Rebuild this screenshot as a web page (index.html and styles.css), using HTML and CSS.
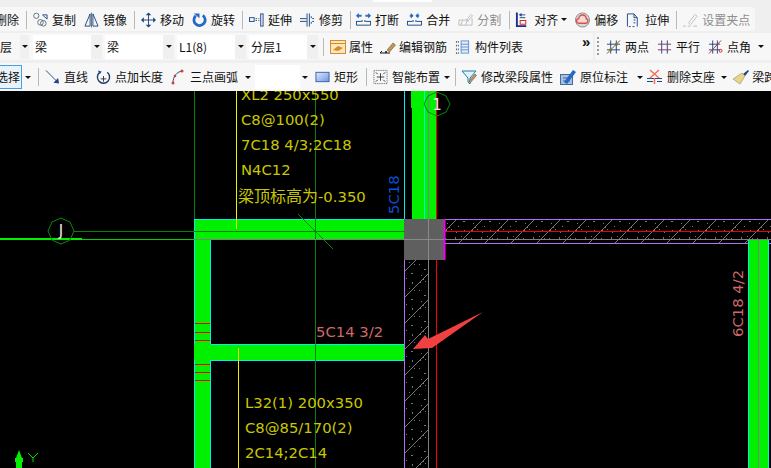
FILE: index.html
```html
<!DOCTYPE html>
<html lang="zh">
<head>
<meta charset="utf-8">
<title>梁绘制</title>
<link rel="stylesheet" href="styles.css">
</head>
<body>
<i class="notch"></i>
<div class="toolbars">
  <div class="row row-one">
    <div class="bar bar-one">
      <span class="label clip-left">删除</span>
      <i class="sep"></i>
      <span class="tool"><svg class="ic" viewBox="0 0 16 16"><circle cx="3.500" cy="3.500" r="2.800" class="s-gray"/><circle cx="11" cy="11.500" r="3" class="s-gray"/><circle cx="8" cy="10.500" r="3" class="s-gray"/><path d="M10.500 2.500h4.500v4.500M15 7l-5-4.500" class="s-navy"/></svg><span class="label">复制</span></span>
      <span class="tool"><svg class="ic" viewBox="0 0 16 16"><path d="M6.500 1.500v13H1zM9.500 1.500v13H15z" class="s-navy"/><path d="M8 0v16" class="s-gray"/></svg><span class="label">镜像</span></span>
      <i class="sep"></i>
      <span class="tool"><svg class="ic" viewBox="0 0 16 16"><path d="M8 1v14M1 8h14" class="s-navy"/><path d="M8 0l3 3H5zM8 16l3-3H5zM0 8l3-3v6zM16 8l-3-3v6z" class="f-navy"/></svg><span class="label">移动</span></span>
      <span class="tool"><svg class="ic" viewBox="0 0 16 16"><path d="M4 3.500a6 6 0 1 0 7.500-.5" class="s-blue-thick"/><path d="M2 1h6v5z" class="f-blue"/></svg><span class="label">旋转</span></span>
      <i class="sep"></i>
      <span class="tool"><svg class="ic" viewBox="0 0 16 16"><rect x="0.500" y="5.500" width="5" height="4" class="s-navy"/><path d="M7 6.500h1.500M7 8.500h1.500M10 6.500h1M10 8.500h1" class="s-navy"/><rect x="12.500" y="1.500" width="2.500" height="13" class="s-navy"/></svg><span class="label">延伸</span></span>
      <span class="tool"><svg class="ic" viewBox="0 0 16 16"><path d="M0 6.500h7M0 9.500h7M7.500 1v14M10 1v14M12 4v2M12 10v2M13 6.500h2M13 9.500h2" class="s-navy"/></svg><span class="label">修剪</span></span>
      <i class="sep sep-break"></i>
      <span class="tool"><svg class="ic" viewBox="0 0 16 16"><path d="M1 3.500h5M10 3.500h5" class="s-blue-2"/><path d="M0 3.500l3-3v6zM16 3.500l-3-3v6z" class="f-blue"/><path d="M.5 9v4.500h15V9M.5 9.500H6M10 9.500h5.500M6.500 8v2M9.500 8v2" class="s-navy"/></svg><span class="label">打断</span></span>
      <span class="tool"><svg class="ic" viewBox="0 0 16 16"><path d="M3 3.500h3M10 3.500h3" class="s-blue-2"/><path d="M7 3.500l-3-3v6zM9 3.500l3-3v6z" class="f-blue"/><path d="M.5 9v4.500h15V9M.5 9.500H6M10 9.500h5.500M6.500 8v2M9.500 8v2" class="s-navy"/></svg><span class="label">合并</span></span>
      <span class="tool"><svg class="ic" viewBox="0 0 16 16"><path d="M1 8h10M1 13.500h14M1 8v5.500M15 6v7.500M5 8l-2 5.500M10 8l-2 5.500" class="s-light"/><path d="M9 8l5-6 1.500 1.500-5 6z" class="s-light"/></svg><span class="label muted">分割</span></span>
      <i class="sep sep-wide"></i>
      <span class="tool tool-align"><svg class="ic" viewBox="0 0 16 16"><path d="M2 0v15M1 14.500h11" class="s-navy-2"/><rect x="5.500" y="8.500" width="6" height="4" class="s-red"/><path d="M11 2.500H5M11 5.500H5" class="s-navy"/><path d="M4 2.500l3-2v4z" class="f-navy"/></svg><span class="label">对齐</span><b class="caret"></b></span>
      <span class="tool"><svg class="ic" viewBox="0 0 16 16"><circle cx="8" cy="8" r="7.500" class="s-gray-fill"/><path d="M4.500 11.500a2.500 2.500 0 0 1-.5-5 4 4 0 0 1 8 .2 2.500 2.500 0 0 1 0 4.800z" class="s-red-soft"/></svg><span class="label">偏移</span></span>
      <span class="tool"><svg class="ic" viewBox="0 0 16 16"><path d="M1.500 15V1.500h7l3.500 4V15" class="s-navy"/><path d="M8.500 1.500v4h3.500M8 8h2M8 11h2M3 15h2M7 15h2" class="s-navy"/></svg><span class="label">拉伸</span></span>
      <i class="sep"></i>
      <span class="tool"><svg class="ic" viewBox="0 0 16 16"><path d="M0 14.500h3M5 14.500h3M11 14.500h4M6 11l7-9 2 2-7 9z" class="s-light"/></svg><span class="label muted">设置夹点</span></span>
    </div>
  </div>

  <div class="row row-two">
    <div class="bar bar-two-left">
      <span class="label stub">层</span>
      <span class="arrow-btn stub-arrow"><b class="caret"></b></span>
      <span class="combo"><span class="field">梁</span><span class="arrow-btn"><b class="caret"></b></span></span>
      <span class="combo"><span class="field">梁</span><span class="arrow-btn"><b class="caret"></b></span></span>
      <span class="combo"><span class="field">L1(8)</span><span class="arrow-btn"><b class="caret"></b></span></span>
      <span class="combo"><span class="field">分层1</span><span class="arrow-btn"><b class="caret"></b></span></span>
      <i class="sep sep-combo"></i>
      <span class="tool tool-prop"><svg class="ic ic-16" viewBox="0 0 16 16"><rect x="0.500" y="1.500" width="15" height="13" class="s-orange"/><path d="M0.500 4.500h15" class="s-orange"/><path d="M3 11l5-4 5 2-5 3z" class="f-gold"/></svg><span class="label">属性</span></span>
      <span class="tool tool-rebar"><svg class="ic ic-16" viewBox="0 0 16 16"><path d="M0 14h10M0 14l2-2" class="s-black"/><circle cx="6" cy="13" r="1" class="f-black"/><path d="M7 11l6-7 2.500 2-6 7z" class="f-pencil"/></svg><span class="label">编辑钢筋</span></span>
      <span class="tool tool-list"><svg class="ic" viewBox="0 0 16 16"><path d="M1 2.500h3M1 6.500h3M1 10.500h3M1 14.500h3" class="s-dash-2"/><rect x="6.500" y="1.500" width="8" height="13" class="s-blue-soft"/><path d="M6.500 5h8M6.500 8h8M6.500 11h8" class="s-blue-soft"/></svg><span class="label">构件列表</span></span>
      <span class="more">»</span>
    </div>
    <div class="bar bar-two-right">
      <i class="grip"></i>
      <span class="tool tool-snap"><svg class="ic" viewBox="0 0 16 16"><path d="M5 1v14M11 1v14M1 5h14M1 11h14" class="s-navy"/><path d="M1 15L15 1" class="s-red"/><circle cx="5" cy="11" r="1.600" class="f-olive"/><circle cx="11" cy="5" r="1.600" class="f-olive"/></svg><span class="label">两点</span></span>
      <span class="tool tool-snap"><svg class="ic" viewBox="0 0 16 16"><path d="M5 1v14M11 1v14" class="s-navy"/><path d="M1 5h14M1 11h14" class="s-red-dim"/></svg><span class="label">平行</span></span>
      <span class="tool tool-snap"><svg class="ic" viewBox="0 0 16 16"><path d="M5 1v14M10 1v14M1 5h12M1 11h12" class="s-navy"/><path d="M1 15L14 1" class="s-red"/><circle cx="13.500" cy="12" r="1.500" class="s-red"/></svg><span class="label">点角</span></span>
      <b class="caret caret-far"></b>
    </div>
  </div>

  <div class="row row-three">
    <div class="bar bar-three">
      <span class="picked"><span class="label">选择</span></span>
      <b class="caret caret-pick"></b>
      <i class="sep sep-pick"></i>
      <span class="tool"><svg class="ic" viewBox="0 0 16 16"><path d="M1 1l12 12" class="s-navy"/><path d="M15 15l-6-1 5-5z" class="f-navy"/></svg><span class="label">直线</span></span>
      <span class="tool"><svg class="ic" viewBox="0 0 16 16"><path d="M4 3a6.500 6.500 0 1 0 8 0" class="s-dark-2"/><path d="M8 7v6M5 10h6" class="s-dark"/><path d="M2 1l4 1-2 3z" class="f-navy"/></svg><span class="label">点加长度</span></span>
      <span class="tool"><svg class="ic ic-13" viewBox="0 0 13 16"><path d="M2 14C2 7 6 3 11 2" class="s-navy"/><circle cx="2" cy="14" r="1.500" class="f-red"/><circle cx="11" cy="2" r="1.500" class="f-red"/><circle cx="4" cy="7" r="1.300" class="f-red"/></svg><span class="label label-arc">三点画弧</span></span>
      <b class="caret caret-arc"></b>
      <span class="field field-blank"></span>
      <span class="arrow-btn arrow-blank"><b class="caret"></b></span>
      <span class="tool tool-rect"><svg class="ic" viewBox="0 0 16 16"><defs><linearGradient id="rectFill" x1="0" y1="0" x2="1" y2="1"><stop offset="0" stop-color="#dfe9fb"/><stop offset="1" stop-color="#6f96e0"/></linearGradient></defs><rect x="1" y="3" width="14" height="10" fill="url(#rectFill)" stroke="#3a5fb0"/></svg><span class="label">矩形</span></span>
      <i class="sep"></i>
      <span class="tool tool-smart"><svg class="ic" viewBox="0 0 16 16"><rect x="1" y="1" width="14" height="14" class="s-dash"/><path d="M8 4v8M4 8h8" class="s-dark"/><path d="M3 3l2 2M13 3l-2 2M3 13l2-2M13 13l-2-2" class="s-dark"/></svg><span class="label">智能布置</span><b class="caret"></b></span>
      <i class="sep sep-smart"></i>
      <span class="tool tool-edit"><svg class="ic ic-16" viewBox="0 0 16 16"><path d="M1 2h14L9 9v6l-2-2V9z" class="s-teal"/><path d="M8 12l6-7 1.500 1.500-6 7z" class="f-pencil"/></svg><span class="label">修改梁段属性</span></span>
      <span class="tool tool-edit"><svg class="ic ic-16" viewBox="0 0 16 16"><rect x="0.500" y="5.500" width="12" height="10" class="s-steel"/><path d="M3 9h7M3 12h7" class="s-steel"/><path d="M4 13l9-12 3 2-9 12z" class="f-blue"/></svg><span class="label">原位标注</span></span>
      <b class="caret caret-mark"></b>
      <span class="tool tool-del"><svg class="ic ic-16" viewBox="0 0 16 16"><path d="M0 9.500h15M0 12.500h6M10 12.500h5" class="s-navy"/><path d="M3 1l9 8M12 1L3 9M7.500 9v6" class="s-coral"/></svg><span class="label">删除支座</span></span>
      <b class="caret caret-del"></b>
      <span class="tool tool-brush"><svg class="ic ic-16" viewBox="0 0 16 16"><path d="M10 5l5-4 1 1-4 5z" class="f-navy"/><path d="M0 10l9-6 3 3-5 8z" class="f-straw"/></svg><span class="label">梁跨</span></span>
    </div>
  </div>
</div>

<svg class="canvas" viewBox="0 91 771 377" aria-label="梁平面图">
  <defs>
    <pattern id="hatch" width="26" height="26" patternUnits="userSpaceOnUse">
      <path d="M0 26L26 0" class="h-line"/>
      <path d="M3 4h1v1H3zM8 9h2v1H8zM13 3h1v2h-1zM18 7h1v1h-1zM5 15h1v1H5zM11 14h1v1h-1zM21 13h2v1h-2zM16 18h1v1h-1zM3 22h2v1H3zM9 21h1v1H9zM22 22h1v2h-1zM14 24h1v1h-1zM24 4h1v1h-1zM7 19h1v1H7zM19 2h1v1h-1z" class="h-dot"/>
    </pattern>
  </defs>
  <rect x="0" y="91" width="771" height="377" class="bg"/>

  <rect x="445" y="220" width="326" height="23" fill="url(#hatch)"/>
  <rect x="405" y="260" width="24" height="208" fill="url(#hatch)"/>
  <path d="M445 219.500H771M445 243.500H771M404.500 260V468" class="l-purple"/>
  <path d="M445 231.500H771M436.500 91V219M436.500 260V468" class="l-red"/>
  <path d="M445 239.500H771M428.500 260V468" class="l-gray"/>

  <path d="M411 91h25v128h-24v-111h-1z" class="g-fill"/>
  <path d="M404.500 91V219M424.500 91V219" class="l-cyan"/>
  <path d="M428.500 91V219" class="l-gray"/>
  <path d="M436.500 91V219" class="l-red"/>

  <rect x="194" y="219" width="210" height="20" class="g-fill"/>
  <rect x="195" y="239" width="16" height="229" class="g-fill"/>
  <rect x="194" y="344" width="210" height="16" class="g-fill"/>
  <path d="M194 219.500H404M194.500 219V344M194.500 360V468M210.500 239V344M210.500 360V468M211 344.500H404M211 360.500H404" class="l-cyan"/>
  <path d="M195 323.500H210M195 332.500H210M195 340.500H210M195 364.500H210M195 372.500H210M195 380.500H210" class="l-red"/>

  <rect x="748" y="240" width="21" height="228" class="g-fill"/>
  <path d="M748.500 240V468M768.500 240V468" class="l-cyan"/>
  <path d="M758.500 240V468" class="l-gray"/>

  <path d="M194.500 91V219M315.500 91V468M74 231.500H404M298 214L333 249" class="l-dark"/>
  <path d="M236.500 91V229M238.500 348V468" class="l-yellow"/>
  <path d="M82 239.500H194" class="l-bright-thin"/>
  <path d="M0 239H82" class="l-bright"/>
  <path d="M194 239.500H404" class="l-gray"/>

  <rect x="404" y="219" width="40" height="41" class="col"/>
  <path d="M444.500 219V260" class="l-magenta"/>
  <path d="M428.500 219V260M404 239.500H444" class="l-gray-light"/>

  <polygon points="61,218 70,222 74,231 70,240 61,244 52,240 48,231 52,222" class="axis"/>
  <polygon points="437,92 446,96 450,104 446,112 437,116 428,112 424,104 428,96" class="axis"/>
  <text x="61" y="236" class="t-axis">J</text>
  <text x="437" y="110" class="t-axis">1</text>

  <text x="241" y="100" class="t-note">XL2 250x550</text>
  <text x="241" y="125" class="t-note">C8@100(2)</text>
  <text x="241" y="150" class="t-note">7C18 4/3;2C18</text>
  <text x="241" y="175" class="t-note">N4C12</text>
  <text x="238" y="202" class="t-note"><tspan class="t-cjk">梁顶标高为</tspan>-0.350</text>
  <text x="245" y="408" class="t-note">L32(1) 200x350</text>
  <text x="245" y="433" class="t-note">C8@85/170(2)</text>
  <text x="245" y="458" class="t-note">2C14;2C14</text>
  <text x="316" y="337" class="t-rebar">5C14 3/2</text>
  <text transform="translate(399 214) rotate(-90)" class="t-blue">5C18</text>
  <text transform="translate(743 337) rotate(-90)" class="t-rebar">6C18 4/2</text>

  <polygon points="413,349 425,335 428,339 483,312 432,348" class="pointer"/>
  <polygon points="19,450 22,458 23,458 23,462 22,462 22,468 16,468 16,462 15,462 15,458 16,458" class="y-arrow"/>
  <path d="M28 453L33 458L38 453M33 458V462" class="y-mark"/>
</svg>
</body>
</html>
```

FILE: styles.css
```css
* { box-sizing: border-box; }
html, body { margin: 0; padding: 0; width: 771px; height: 468px; overflow: hidden; background: #efefef; }
body { position: relative; font: 12px/16px "Noto Sans CJK SC", "Noto Sans", sans-serif; color: #111; }

.notch { position: absolute; left: 373px; top: 0; width: 59px; height: 2px; background: #fff; }

.toolbars { padding-top: 7px; display: flex; flex-direction: column; height: 91px; overflow: hidden; }
.row { display: flex; flex: none; overflow: hidden; }
.row-one { height: 24px; margin-bottom: 2px; }
.row-two { height: 27px; margin-bottom: 3px; }
.row-three { height: 28px; }

.bar { display: flex; align-items: center; gap: 8px; background: #f7f7f7; white-space: nowrap; flex: none; }
.bar-one { width: 755px; padding-top: 1px; border-radius: 0 3px 3px 0; }
.bar-two-left { width: 593px; gap: 0; border-radius: 0 3px 3px 0; }
.bar-two-right { flex: 1; margin-left: 2px; border-radius: 3px 0 0 3px; gap: 0; overflow: hidden; }
.bar-three { width: 771px; gap: 0; }

.tool { display: flex; align-items: center; gap: 4px; flex: none; }
.ic { width: 15px; height: 16px; flex: none; overflow: visible; }
.ic-16 { width: 16px; }
.ic-13 { width: 13px; }
.label { display: block; flex: none; }
.muted { color: #8e8e8e; }
.clip-left { margin-left: -5px; }

.sep { display: block; width: 1px; height: 18px; background: #b9b9b9; flex: none; margin: 0 -2px 0 -1px; }
.bar-one .sep-break { margin: 0 -3px 0 -1px; }
.bar-one .sep-wide { margin: 0 -1px 0 0; }
.tool-align { margin-left: -2px; gap: 3px; }
.tool-align .label { margin-left: 1px; }

.caret { display: block; width: 0; height: 0; border: 3px solid transparent; border-top: 3px solid #111; border-bottom: 0; flex: none; }
.arrow-btn { display: flex; width: 11px; height: 24px; align-items: center; justify-content: center; background: #f0f0f0; flex: none; }
.combo { display: flex; height: 24px; margin-right: 3px; flex: none; }
.field { display: block; width: 58px; height: 24px; padding: 4px 2px 0 2px; background: #fff; flex: none; }
.stub { width: 12px; margin-right: 8px; }
.stub-arrow { margin-right: 4px; width: 9px; }
.sep-combo { margin: 0 6px 0 2px; }
.tool-prop { margin-right: 7px; gap: 3px; }
.tool-rebar { margin-right: 8px; gap: 3px; }
.tool-list { gap: 5px; }
.more { margin-left: 59px; font: bold 15px/14px "Liberation Sans", sans-serif; height: 24px; }

.grip { display: block; width: 2px; height: 20px; margin: 0 7px 0 2px; background: repeating-linear-gradient(#9a9a9a 0 2px, transparent 2px 4px); flex: none; }
.tool-snap { margin-right: 8px; gap: 4px; }
.tool-snap .ic { width: 15px; }
.caret-far { margin-left: -1px; }

.picked { display: block; width: 23px; height: 24px; margin-left: -1px; padding: 3px 0 0 0; border: 1px solid #4a9de0; background: #e9f3fb; overflow: hidden; flex: none; }
.picked .label { margin-left: -4px; }
.caret-pick { margin-left: 3px; }
.bar-three .tool { margin-right: 8px; }
.label-arc { margin-left: 2px; }
.bar-three .caret-arc { margin: 0 4px 0 -1px; }
.field-blank { width: 45px; }
.arrow-blank { width: 10px; margin-right: 5px; background: #f7f7f7; }
.bar-three .tool-rect { margin-right: 8px; }
.bar-three .sep { margin: 0 6px 0 0; }
.bar-three .sep-pick { margin: 0 6px 0 7px; }
.bar-three .tool-smart { margin-right: 5px; }
.bar-three .sep-smart { margin-right: 5px; }
.bar-three .tool-edit { margin-right: 7px; }
.bar-three .caret-mark { margin: 0 4px 0 2px; }
.bar-three .caret-del { margin: 0 6px 0 6px; }
.bar-three .tool-del { margin-right: 0; }
.tool-brush { gap: 3px; }

.s-gray, .s-navy, .s-navy-2, .s-blue-2, .s-blue-thick, .s-light, .s-red, .s-red-dim, .s-dark, .s-dark-2, .s-black, .s-dash, .s-dash-2, .s-coral { fill: none; stroke-width: 1; }
.s-gray { stroke: #5f6f7f; }
.s-navy { stroke: #1d4685; }
.s-navy-2 { stroke: #1b2f8a; stroke-width: 2; }
.s-blue-2 { stroke: #2f6fc4; stroke-width: 2; }
.s-blue-thick { stroke: #2468c8; stroke-width: 3; }
.s-light { stroke: #bdbdbd; }
.s-red { stroke: #d42020; }
.s-gray-fill { fill: #d8d8d8; stroke: #8a8a8a; stroke-width: 1; }
.s-red-soft { stroke: #d8504a; stroke-width: 1.500; fill: #f6d9d0; }
.s-red-dim { stroke: #8a3060; }
.s-orange { stroke: #d88a30; stroke-width: 1; fill: #fbe6b8; }
.s-dark { stroke: #333; }
.s-black { stroke: #111; }
.s-dark-2 { stroke: #1e3c70; stroke-width: 1.500; }
.s-blue-soft { stroke: #5f8fd0; stroke-width: 1; fill: #e4eefb; }
.s-dash { stroke: #555; stroke-dasharray: 1 1; }
.s-dash-2 { stroke: #4a5a6a; stroke-width: 2; stroke-dasharray: 1 1; }
.s-teal { stroke: #1f7ca8; stroke-width: 1; fill: #e0f3fb; }
.s-coral { stroke: #f0705a; stroke-width: 1.500; }
.s-steel { fill: #a9c0e0; stroke: #4a6a9a; stroke-width: 1; }
.f-blue { fill: #2468c8; }
.f-gold { fill: #c89030; }
.f-pencil { fill: #c8964a; stroke: #444; stroke-width: .5; }
.f-olive { fill: #5a8a20; }
.f-navy { fill: #1d4685; }
.f-black { fill: #111; }
.f-red { fill: #d8402a; }
.f-straw { fill: #e8d48a; stroke: #8a7a40; stroke-width: .5; }

.canvas { display: block; width: 771px; height: 377px; flex: none; }
.bg { fill: #000; }
.h-line { fill: none; stroke: #777; stroke-width: 1; }
.h-dot { fill: #777; }
.g-fill { fill: #00f000; }
.col { fill: #5f5f5f; }
.axis { fill: none; stroke: #0a8a0a; stroke-width: 1; }
.l-purple, .l-red, .l-gray, .l-cyan, .l-dark, .l-yellow, .l-bright, .l-bright-thin, .l-magenta, .l-gray-light, .y-mark { fill: none; stroke-width: 1; }
.l-purple { stroke: #b070f0; }
.l-red { stroke: #f00000; }
.l-gray { stroke: #808080; }
.l-gray-light { stroke: #8a8a8a; }
.l-cyan { stroke: #00f0f0; }
.l-dark { stroke: #0a800a; }
.l-yellow { stroke: #f0f000; }
.l-bright { stroke: #00f000; stroke-width: 2; }
.l-bright-thin { stroke: #00d000; }
.l-magenta { stroke: #f000f0; stroke-width: 2; }
.t-note, .t-rebar, .t-blue, .t-axis { font-family: "DejaVu Sans", "Noto Sans CJK SC", sans-serif; }
.t-note { fill: #c8c800; font-size: 14.800px; }
.t-cjk { font-family: "Noto Sans CJK SC", sans-serif; font-size: 16px; }
.t-rebar { fill: #d06868; font-size: 14.800px; }
.t-blue { fill: #0850d8; font-size: 14.800px; }
.t-axis { fill: #e8e8e8; font-size: 15px; text-anchor: middle; }
.pointer { fill: #f04040; }
.y-arrow { fill: #00f000; }
.y-mark { stroke: #00e000; }
```
